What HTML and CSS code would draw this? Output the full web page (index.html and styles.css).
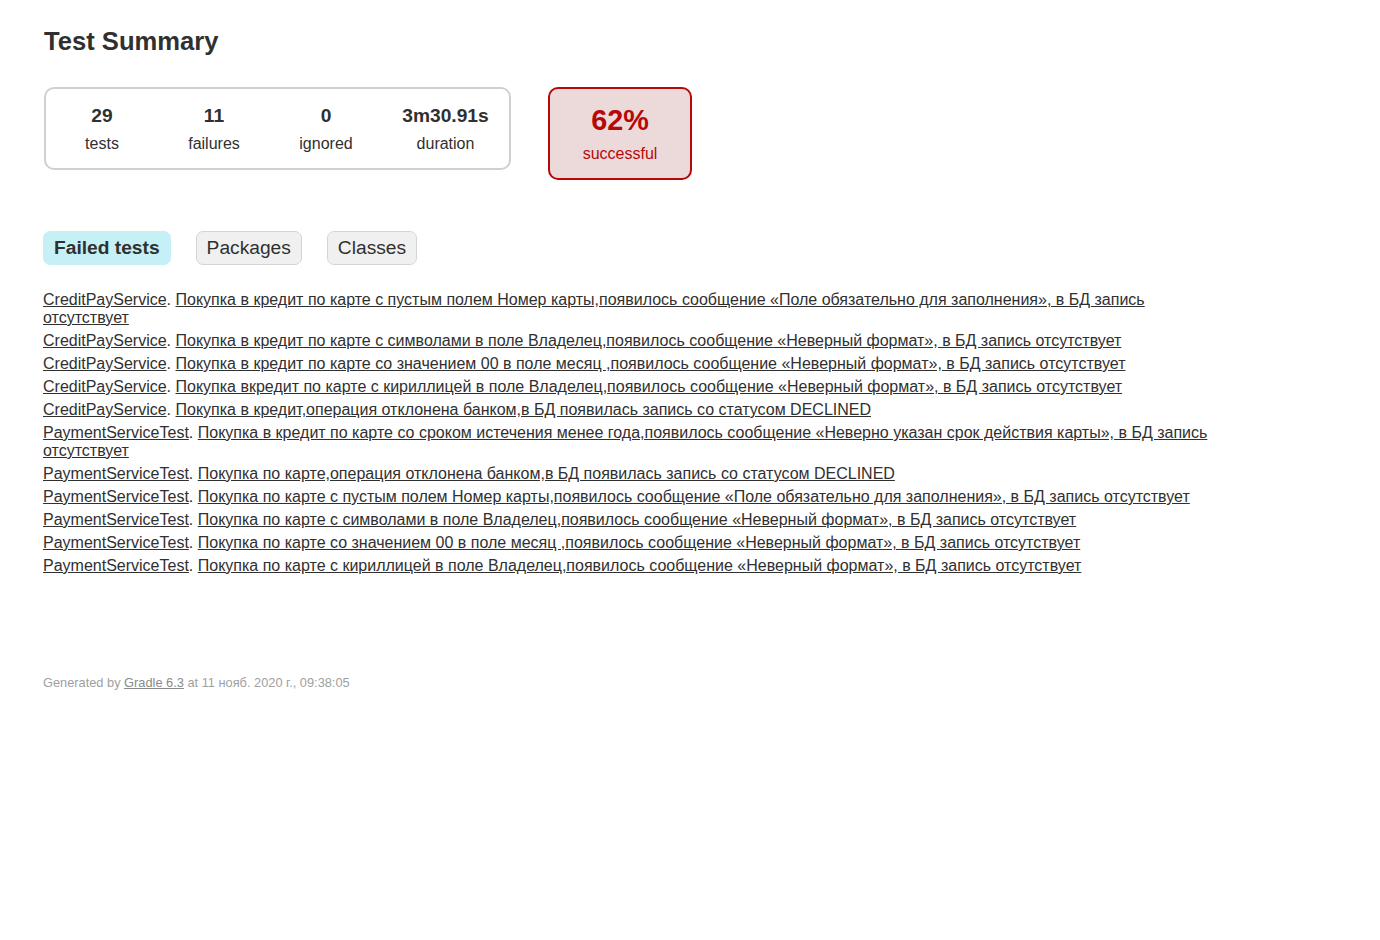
FILE: index.html
```html
<!DOCTYPE html>
<html>
<head>
<meta charset="utf-8">
<title>Test results - Test Summary</title>
<link rel="stylesheet" href="styles.css">
</head>
<body>
<div class="content">
  <h1 class="title">Test Summary</h1>
  <div class="summary">
    <div class="summary-group">
      <div class="info-box"><div class="counter">29</div><p>tests</p></div>
      <div class="info-box"><div class="counter">11</div><p>failures</p></div>
      <div class="info-box"><div class="counter">0</div><p>ignored</p></div>
      <div class="info-box duration"><div class="counter">3m30.91s</div><p>duration</p></div>
    </div>
    <div class="success-rate failures">
      <div class="percent">62%</div>
      <p>successful</p>
    </div>
  </div>
  <ul class="tab-links">
    <li class="selected"><a href="#tab0">Failed tests</a></li>
    <li><a href="#tab1">Packages</a></li>
    <li><a href="#tab2">Classes</a></li>
  </ul>
  <ul class="link-list">
    <li><a href="#">CreditPayService</a>. <a href="#">Покупка в кредит по карте с пустым полем Номер карты,появилось сообщение «Поле обязательно для заполнения», в БД запись отсутствует</a></li>
    <li><a href="#">CreditPayService</a>. <a href="#">Покупка в кредит по карте с символами в поле Владелец,появилось сообщение «Неверный формат», в БД запись отсутствует</a></li>
    <li><a href="#">CreditPayService</a>. <a href="#">Покупка в кредит по карте со значением 00 в поле месяц ,появилось сообщение «Неверный формат», в БД запись отсутствует</a></li>
    <li><a href="#">CreditPayService</a>. <a href="#">Покупка вкредит по карте с кириллицей в поле Владелец,появилось сообщение «Неверный формат», в БД запись отсутствует</a></li>
    <li><a href="#">CreditPayService</a>. <a href="#">Покупка в кредит,операция отклонена банком,в БД появилась запись со статусом DECLINED</a></li>
    <li><a href="#">PaymentServiceTest</a>. <a href="#">Покупка в кредит по карте со сроком истечения менее года,появилось сообщение «Неверно указан срок действия карты», в БД запись отсутствует</a></li>
    <li><a href="#">PaymentServiceTest</a>. <a href="#">Покупка по карте,операция отклонена банком,в БД появилась запись со статусом DECLINED</a></li>
    <li><a href="#">PaymentServiceTest</a>. <a href="#">Покупка по карте с пустым полем Номер карты,появилось сообщение «Поле обязательно для заполнения», в БД запись отсутствует</a></li>
    <li><a href="#">PaymentServiceTest</a>. <a href="#">Покупка по карте с символами в поле Владелец,появилось сообщение «Неверный формат», в БД запись отсутствует</a></li>
    <li><a href="#">PaymentServiceTest</a>. <a href="#">Покупка по карте со значением 00 в поле месяц ,появилось сообщение «Неверный формат», в БД запись отсутствует</a></li>
    <li><a href="#">PaymentServiceTest</a>. <a href="#">Покупка по карте с кириллицей в поле Владелец,появилось сообщение «Неверный формат», в БД запись отсутствует</a></li>
  </ul>
  <div class="footer">
    Generated by <a href="#">Gradle 6.3</a> at 11 нояб. 2020 г., 09:38:05
  </div>
</div>
</body>
</html>
```

FILE: styles.css
```css
html, body {
  margin: 0;
  padding: 0;
  background: #ffffff;
}

body {
  font-family: "Liberation Sans", Arial, sans-serif;
  font-size: 16px;
  color: #303030;
}

a, a:visited {
  color: #303030;
}

.content {
  padding: 27px 50px 30px 43px;
}

.title {
  margin: 0 0 0 1px;
  font-size: 25.6px;
  line-height: 29px;
  font-weight: bold;
  white-space: nowrap;
}

.summary {
  display: flex;
  align-items: flex-start;
  margin: 31px 0 0 1px;
}

.summary-group {
  display: flex;
  border: solid 2px #d0d0d0;
  border-radius: 10px;
}

.info-box {
  width: 112px;
  padding: 16px 0 15px;
  text-align: center;
}

.info-box.duration {
  width: 127px;
}

.info-box p,
.success-rate p {
  margin: 0;
  line-height: 18px;
}

.counter {
  font-size: 19.2px;
  line-height: 22px;
  font-weight: bold;
  margin-bottom: 8px;
}

.success-rate {
  width: 140px;
  margin-left: 37px;
  padding: 15px 0;
  text-align: center;
  border: solid 2px #d0d0d0;
  border-radius: 10px;
}

.success-rate.failures {
  background-color: #ecdada;
  border-color: #b60808;
  color: #b60808;
}

.percent {
  font-size: 28.8px;
  line-height: 33px;
  font-weight: bold;
  margin-bottom: 8px;
}

.tab-links {
  display: flex;
  list-style: none;
  margin: 51px 0 0 0;
  padding: 0;
}

.tab-links li {
  padding: 5px 10px;
  margin-right: 25px;
  border: solid 1px #d4d4d4;
  border-radius: 7px;
  background-color: #f0f0f0;
}

.tab-links li.selected {
  background-color: #c5f0f5;
  border-color: #c5f0f5;
}

.tab-links a {
  display: block;
  font-size: 19.2px;
  line-height: 22px;
  text-decoration: none;
}

.tab-links li.selected a {
  font-weight: bold;
}

.link-list {
  list-style: none;
  margin: 26px 0 0 0;
  padding: 0;
  max-width: 1180px;
}

.link-list li {
  line-height: 18px;
  margin-bottom: 5px;
}

.footer {
  margin-top: 100px;
  font-size: 12.8px;
  line-height: 15px;
  white-space: nowrap;
  color: #a0a0a0;
}

.footer a {
  color: #8a8a8a;
}
```
